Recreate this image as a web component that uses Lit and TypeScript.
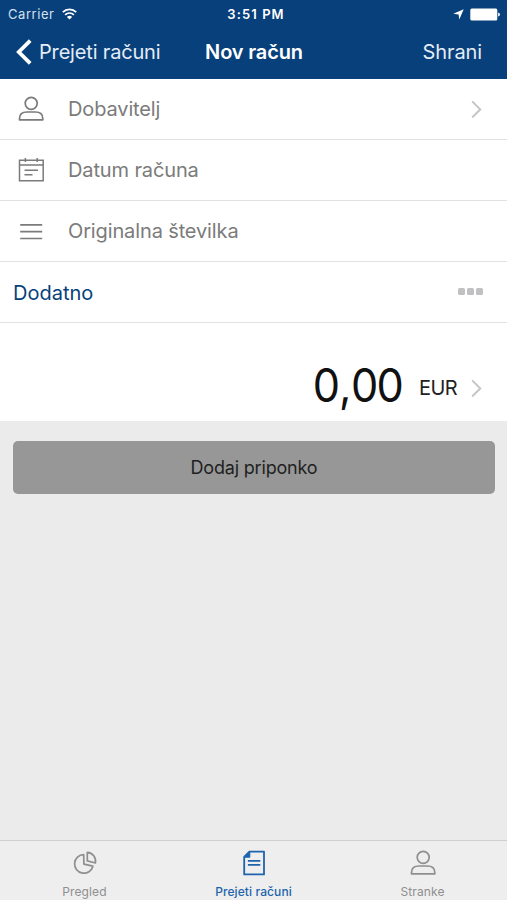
import { LitElement, html, css } from "lit";
import { customElement } from "lit/decorators.js";

const person = html`<svg width="26" height="26" viewBox="0 0 26 26" fill="none" stroke="currentColor" stroke-width="1.7">
  <circle cx="13.2" cy="7.3" r="6" />
  <path d="M1.5 23.8V22.6C1.5 17.8 5 16 9 16H17.4C21.4 16 24.8 17.8 24.8 22.6V23.8Z" stroke-linejoin="round" />
</svg>`;

const calendar = html`<svg width="26" height="26" viewBox="0 0 26 26" fill="none" stroke="currentColor" stroke-width="1.5">
  <path d="M1.5 3.2H25.2V23.8H1.5ZM1.5 7.9H25.2M7.4 1V5M19.2 1V5M6.5 13.3H20M6.5 17.8H14.5" />
</svg>`;

const lines = html`<svg width="26" height="26" viewBox="0 0 26 26" fill="none" stroke="currentColor" stroke-width="1.7">
  <path d="M2.2 6.8H24.2M2.2 13.7H24.2M2.2 20.5H24.2" />
</svg>`;

const pie = html`<svg width="26" height="26" viewBox="0 0 26 26" fill="none" stroke="currentColor" stroke-width="1.7" stroke-linejoin="round">
  <path d="M11.7 4.6A9.3 9.3 0 1 0 20.9 16.2L11.9 14.2Z" />
  <path d="M15.3 2.4V10.9L23.4 13C24.4 7.4 20.7 2.8 15.3 2.4Z" />
</svg>`;

const invoice = html`<svg width="26" height="26" viewBox="0 0 26 26" fill="none" stroke="currentColor" stroke-width="1.8">
  <path d="M8.4 1.6H23V24.4H3.2V6.8Z" stroke-linejoin="round" />
  <path d="M8.8 1.8V7.2H3.4Z" fill="currentColor" stroke-width="1" />
  <path d="M6.9 10.8H19.3M6.9 14.8H19.3" stroke-width="1.8" />
</svg>`;

const chevron = html`<svg width="11" height="18" viewBox="0 0 11 18" fill="none" stroke="#c4c4c6" stroke-width="2">
  <path d="M1.2 1.4L9.2 9.4L1.2 17.4" />
</svg>`;

@customElement("app-root")
export class AppRoot extends LitElement {
  static styles = css`
    :host {
      display: flex;
      flex-direction: column;
      height: 900px;
      width: 100%;
      overflow: hidden;
      background: #ebebeb;
      font-family: Inter, "Liberation Sans", sans-serif;
      color: #111;
    }
    svg { display: block; flex: none; }
    header { background: #08407b; color: #fff; height: 79px; flex: none; }
    .status {
      display: grid;
      grid-template-columns: 1fr auto 1fr;
      align-items: center;
      height: 27px;
      padding: 0 7px 0 8px;
      font-size: 13px;
      line-height: 27px;
    }
    .carrier { display: flex; align-items: center; gap: 7.5px; color: #d5e1ee; letter-spacing: 0.55px; }
    .carrier span { padding-top: 1px; }
    .carrier svg { margin-top: -1px; }
    .clock { font-weight: 600; letter-spacing: 1.1px; padding: 1px 0 0 4px; }
    .power { display: flex; align-items: center; justify-content: flex-end; gap: 6px; }
    .nav {
      display: grid;
      grid-template-columns: 1fr auto 1fr;
      align-items: center;
      height: 50px;
      padding: 0 25px 0 16px;
      font-size: 20px;
      color: #e4edf6;
    }
    .back { display: flex; align-items: center; gap: 7px; letter-spacing: -0.17px; white-space: nowrap; }
    .title { font-weight: 600; color: #fff; letter-spacing: -0.15px; margin-left: 9px; margin-right: -1px; }
    .save { text-align: right; letter-spacing: -0.1px; }
    .row {
      display: flex;
      align-items: center;
      box-sizing: border-box;
      height: 61px;
      flex: none;
      background: #fff;
      border-bottom: 1.5px solid #e2e2e3;
      padding: 0 25px 0 18px;
      font-size: 20px;
      color: #7b7b7b;
    }
    .row .label { margin-left: 24px; flex: 1; letter-spacing: -0.13px; }
    .row .more { margin-left: -5px; flex: 1; color: #08407b; padding-top: 2px; }
    .dots { display: flex; gap: 2px; margin: -1px -1px 0 0; }
    .dots i { width: 7px; height: 7px; border-radius: 1.5px; background: #c1c1c3; }
    .amount {
      display: flex;
      align-items: center;
      justify-content: flex-end;
      box-sizing: border-box;
      height: 98px;
      flex: none;
      background: #fff;
      padding: 32px 25px 0 0;
    }
    .sum { font-size: 46px; line-height: 56px; letter-spacing: -2px; margin-top: -7px; transform: scaleX(0.94); transform-origin: right; }
    .sum b { font-weight: inherit; margin: 0 1.5px 0 1px; }
    .cur { font-size: 20px; margin-left: 17px; margin-right: 14px; letter-spacing: -0.6px; color: #222; }
    .attach {
      margin: 20px 12px 0 13px;
      height: 53px;
      flex: none;
      border: 0;
      border-radius: 5px;
      background: #979797;
      color: #1f1f1f;
      padding: 0;
      font: 18px Inter, "Liberation Sans", sans-serif;
      letter-spacing: -0.18px;
    }
    .tabs {
      margin-top: auto;
      display: grid;
      grid-template-columns: repeat(3, 1fr);
      box-sizing: border-box;
      height: 60px;
      flex: none;
      border-top: 1.5px solid #cfcfcf;
      background: #eee;
      color: #8f8f8f;
    }
    .tab { display: flex; flex-direction: column; align-items: center; padding-top: 9px; font-size: 12px; line-height: 16px; gap: 8px; white-space: nowrap; letter-spacing: 0.1px; }
    .tab.on { color: #1d64ad; font-weight: 500; }
  `;

  private row(icon: unknown, label: string, tail: unknown = "") {
    return html`<div class="row">${icon}<span class="label">${label}</span>${tail}</div>`;
  }

  render() {
    return html`
      <header>
        <div class="status">
          <div class="carrier"><span>Carrier</span>
            <svg width="15" height="12" viewBox="0 0 15 12" fill="none" stroke="#fff" stroke-width="1.7">
              <path d="M0.8 4.2C4.5 .4 10.5 .4 14.2 4.2M3.1 6.8C5.6 4.4 9.4 4.4 11.9 6.8" />
              <path d="M4.9 8.9C6.4 7.5 8.6 7.5 10.1 8.9L7.5 11.5Z" fill="#fff" stroke="none" />
            </svg>
          </div>
          <span class="clock">3:51 PM</span>
          <div class="power">
            <svg width="11" height="11" viewBox="0 0 11 11" fill="#fff"><path d="M10.7 .3L6.3 10.6L5.6 5.6L.3 4.8Z" /></svg>
            <svg width="30" height="13" viewBox="0 0 30 13" fill="#fff"><rect x=".3" y=".5" width="27" height="12" rx="1.5" /><path d="M28.1 4.4Q30 5 30 6.5T28.1 8.6Z" /></svg>
          </div>
        </div>
        <div class="nav">
          <div class="back">
            <svg width="16" height="26" viewBox="0 0 16 26" fill="none" stroke="#fff" stroke-width="3.8"><path d="M14.2 1.6L2.8 13L14.2 24.4" /></svg>
            <span>Prejeti računi</span>
          </div>
          <span class="title">Nov račun</span>
          <span class="save">Shrani</span>
        </div>
      </header>
      ${this.row(person, "Dobavitelj", chevron)}
      ${this.row(calendar, "Datum računa")}
      ${this.row(lines, "Originalna številka")}
      <div class="row"><span class="more">Dodatno</span><span class="dots"><i></i><i></i><i></i></span></div>
      <div class="amount"><span class="sum">0<b>,</b>00</span><span class="cur">EUR</span>${chevron}</div>
      <button class="attach">Dodaj priponko</button>
      <nav class="tabs">
        <div class="tab">${pie}<span>Pregled</span></div>
        <div class="tab on">${invoice}<span>Prejeti računi</span></div>
        <div class="tab">${person}<span>Stranke</span></div>
      </nav>
    `;
  }
}
